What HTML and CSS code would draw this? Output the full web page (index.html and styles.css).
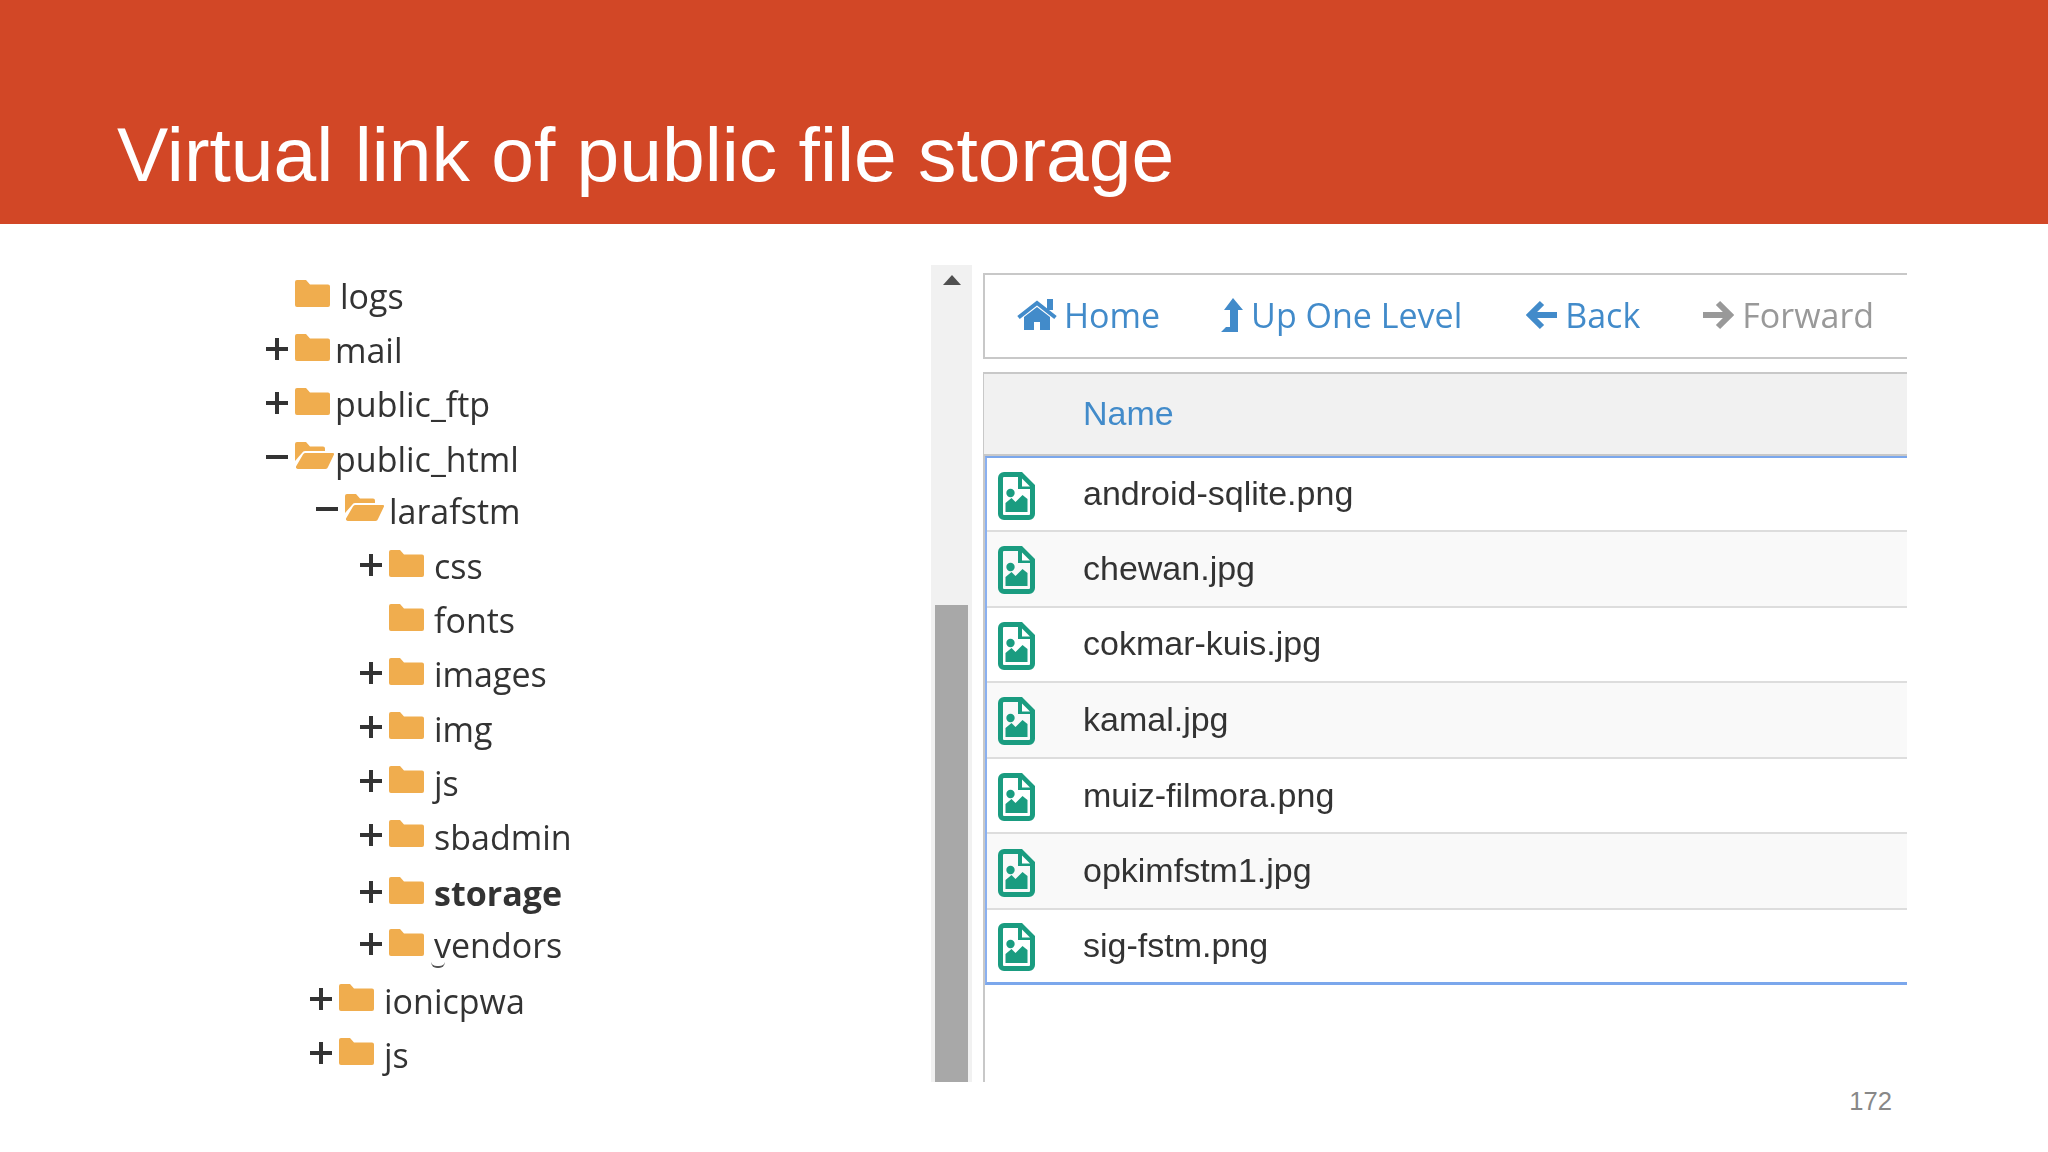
FILE: index.html
```html
<!DOCTYPE html>
<html lang="en">
<head>
<meta charset="utf-8">
<title>Virtual link of public file storage</title>
<link rel="stylesheet" href="styles.css">
</head>
<body>
<svg class="sprite" aria-hidden="true">
  <symbol id="folder" viewBox="0 0 35 27"><path d="M2 0h9l4 4.500h18a2 2 0 0 1 2 2V25a2 2 0 0 1-2 2H2a2 2 0 0 1-2-2V2a2 2 0 0 1 2-2z"/></symbol>
  <symbol id="folder-open" viewBox="0 0 39 27"><path d="M0 19V2a2 2 0 0 1 2-2h9l4 4.500h13a2 2 0 0 1 2 2V9H10q-2 0-3 2z"/><path d="M10 11h28a1 1 0 0 1 1 1.500L33 25a3 3 0 0 1-2.500 2H3a2 2 0 0 1-2-2.500L8 12.500q.8-1.500 2-1.500z"/></symbol>
  <symbol id="plus" viewBox="0 0 22 22"><path d="M0 9h22v4H0zM9 0h4v22H9z"/></symbol>
  <symbol id="minus" viewBox="0 0 22 22"><path d="M0 9h22v4H0z"/></symbol>
  <symbol id="file" viewBox="0 0 37 48"><path fill="#1a9c80" fill-rule="evenodd" d="M6 0h18l13 13v29a6 6 0 0 1-6 6H6a6 6 0 0 1-6-6V6a6 6 0 0 1 6-6zm0 5a1 1 0 0 0-1 1v36a1 1 0 0 0 1 1h25a1 1 0 0 0 1-1V17H20V5z"/><path fill="#fff" d="M24 6.500 32 14.500H24z"/><path fill="#1a9c80" d="M7.500 40v-9l6-5 4 4 7-7 5 4v13z"/><circle fill="#1a9c80" cx="12.500" cy="21" r="4.200"/></symbol>
  <symbol id="home" viewBox="0 0 40 31"><path d="M30 0h6v11h-6z"/><path d="M7 18 20 8l13 10v13H23v-8h-6v8H7z"/><path fill="none" stroke="currentColor" stroke-width="4" d="M1.500 18.500 20 4l18.500 14.500"/></symbol>
  <symbol id="level-up" viewBox="0 0 22 34"><path d="M12 0l10 12h-5v22H0l5-5h4V12H3z"/></symbol>
  <symbol id="arrow-left" viewBox="0 0 31 30"><path fill="none" stroke="currentColor" stroke-width="6" d="M16 3 4 15l12 12M4 15h27"/></symbol>
  <symbol id="arrow-right" viewBox="0 0 31 30"><path fill="none" stroke="currentColor" stroke-width="6" d="M15 3l12 12-12 12M27 15H0"/></symbol>
</svg>

<div class="slide">
  <header class="banner"><h1 class="title">Virtual link of public file storage</h1></header>

  <main class="content">
    <ul class="tree">
      <li class="node lv0 leaf"><span class="toggle"></span><svg class="folder"><use href="#folder"/></svg><span class="label gap-l">logs</span></li>
      <li class="node lv0"><svg class="toggle"><use href="#plus"/></svg><svg class="folder"><use href="#folder"/></svg><span class="label">mail</span></li>
      <li class="node lv0"><svg class="toggle"><use href="#plus"/></svg><svg class="folder"><use href="#folder"/></svg><span class="label">public_ftp</span></li>
      <li class="node lv0"><svg class="toggle"><use href="#minus"/></svg><svg class="folder-open"><use href="#folder-open"/></svg><span class="label flush">public_html</span></li>
      <li class="node lv1 short"><svg class="toggle"><use href="#minus"/></svg><svg class="folder-open"><use href="#folder-open"/></svg><span class="label">larafstm</span></li>
      <li class="node lv2 tall"><svg class="toggle"><use href="#plus"/></svg><svg class="folder"><use href="#folder"/></svg><span class="label gap-m">css</span></li>
      <li class="node lv2"><span class="toggle"></span><svg class="folder"><use href="#folder"/></svg><span class="label gap-m">fonts</span></li>
      <li class="node lv2"><svg class="toggle"><use href="#plus"/></svg><svg class="folder"><use href="#folder"/></svg><span class="label gap-m">images</span></li>
      <li class="node lv2"><svg class="toggle"><use href="#plus"/></svg><svg class="folder"><use href="#folder"/></svg><span class="label gap-m">img</span></li>
      <li class="node lv2"><svg class="toggle"><use href="#plus"/></svg><svg class="folder"><use href="#folder"/></svg><span class="label gap-m">js</span></li>
      <li class="node lv2"><svg class="toggle"><use href="#plus"/></svg><svg class="folder"><use href="#folder"/></svg><span class="label gap-m">sbadmin</span></li>
      <li class="node lv2 taller"><svg class="toggle"><use href="#plus"/></svg><svg class="folder"><use href="#folder"/></svg><span class="label gap-m strong">storage</span></li>
      <li class="node lv2 short vendors"><svg class="toggle"><use href="#plus"/></svg><svg class="folder"><use href="#folder"/></svg><span class="label gap-m">vendors</span></li>
      <li class="node lv1b tall"><svg class="toggle"><use href="#plus"/></svg><svg class="folder"><use href="#folder"/></svg><span class="label gap-m">ionicpwa</span></li>
      <li class="node lv1b"><svg class="toggle"><use href="#plus"/></svg><svg class="folder"><use href="#folder"/></svg><span class="label gap-m">js</span></li>
    </ul>

    <div class="scrollbar">
      <span class="scroll-up"></span>
      <span class="thumb"></span>
    </div>

    <section class="panel">
      <nav class="toolbar">
        <a class="tool home"><svg class="ico-home"><use href="#home"/></svg>Home</a>
        <a class="tool up"><svg class="ico-up"><use href="#level-up"/></svg>Up One Level</a>
        <a class="tool back"><svg class="ico-arrow"><use href="#arrow-left"/></svg>Back</a>
        <a class="tool forward"><svg class="ico-arrow"><use href="#arrow-right"/></svg>Forward</a>
      </nav>
      <div class="listing">
        <div class="head"><span class="head-name">Name</span></div>
        <div class="rows">
          <div class="row"><svg class="file"><use href="#file"/></svg><span class="name">android-sqlite.png</span></div>
          <div class="row"><svg class="file"><use href="#file"/></svg><span class="name">chewan.jpg</span></div>
          <div class="row"><svg class="file"><use href="#file"/></svg><span class="name">cokmar-kuis.jpg</span></div>
          <div class="row"><svg class="file"><use href="#file"/></svg><span class="name">kamal.jpg</span></div>
          <div class="row"><svg class="file"><use href="#file"/></svg><span class="name">muiz-filmora.png</span></div>
          <div class="row"><svg class="file"><use href="#file"/></svg><span class="name">opkimfstm1.jpg</span></div>
          <div class="row"><svg class="file"><use href="#file"/></svg><span class="name">sig-fstm.png</span></div>
        </div>
      </div>
    </section>
  </main>

  <footer class="footer">172</footer>
</div>
</body>
</html>
```

FILE: styles.css
```css
* { box-sizing: border-box; }
html, body { margin: 0; padding: 0; background: #fff; }
.sprite { display: none; }

.slide { width: 2048px; height: 1152px; display: flex; flex-direction: column; overflow: hidden; background: #fff; }

.banner { height: 224px; flex: none; background: #d24726; display: flex; align-items: flex-end; padding: 0 0 28px 117px; }
.title { margin: 0; font: 400 76.800px/84px "Liberation Sans", Arial, sans-serif; color: #fff; }

.content { display: flex; height: 858px; flex: none; filter: blur(.45px); }

.tree { list-style: none; margin: 0; padding: 45px 0 0 265px; width: 931px; flex: none; font: 400 34px/54px "Open Sans", sans-serif; color: #333; }
.node { height: 54.200px; display: flex; align-items: center; position: relative; }
.lv1 { margin-left: 50px; }
.lv1b { margin-left: 44px; }
.lv2 { margin-left: 94px; }
.short { margin-top: -2px; }
.tall { margin-top: 1px; }
.taller { margin-top: 2px; }
.toggle { width: 22px; height: 22px; fill: #333; flex: none; margin: -3px 7px 0 1px; }
.folder { width: 35px; height: 27px; fill: #f0ad4e; flex: none; margin-top: -6px; }
.folder-open { width: 39px; height: 27px; fill: #f0ad4e; flex: none; margin-top: -6px; }
.label { margin-left: 5px; }
.flush { margin-left: 1px; }
.gap-l { margin-left: 10px; }
.gap-m { margin-left: 10px; }
.strong { font-weight: 700; }
.vendors::after { content: ""; position: absolute; left: 72px; top: 44px; width: 14px; height: 4px; border-bottom: 2px solid #555; border-radius: 0 0 8px 8px; }

.scrollbar { width: 41px; height: 817px; margin-top: 41px; flex: none; background: #f1f1f1; display: flex; flex-direction: column; align-items: center; justify-content: space-between; padding-top: 10px; }
.scroll-up { width: 0; height: 0; border-left: 9px solid transparent; border-right: 9px solid transparent; border-bottom: 10px solid #505050; }
.thumb { width: 33px; height: 477px; background: #a8a8a8; }

.panel { width: 924px; height: 809px; margin: 49px 0 0 11px; flex: none; display: flex; flex-direction: column; gap: 13px; }
.toolbar { height: 86px; flex: none; border: solid #c8c8c8; border-width: 2px 0 2px 2px; display: flex; align-items: center; padding-bottom: 3px; font: 400 34px/1 "Open Sans", sans-serif; color: #428bca; }
.tool { display: flex; align-items: center; }
.tool svg { fill: currentColor; color: inherit; flex: none; }
.home { margin-left: 32px; }
.up { margin-left: 61px; }
.back { margin-left: 64px; }
.forward { margin-left: 63px; color: #999; }
.ico-home { width: 40px; height: 31px; margin-right: 7px; }
.ico-up { width: 22px; height: 34px; margin-right: 8px; }
.ico-arrow { width: 31px; height: 30px; margin-right: 8px; }

.listing { flex: 1; border-left: 2px solid #c8c8c8; display: flex; flex-direction: column; }
.head { height: 84px; flex: none; background: #f1f1f1; border-top: 2px solid #c8c8c8; border-bottom: 2px solid #c8c8c8; margin-left: -1px; display: flex; align-items: center; padding: 0 0 2px 99px; font: 400 34px/1 "Liberation Sans", sans-serif; color: #428bca; }
.rows { border-top: 2px solid #7ba7ec; border-left: 2px solid #8ab0f0; border-bottom: 3px solid #7ba7ec; font: 400 34px/1 "Liberation Sans", sans-serif; color: #333; }
.row { height: 75.600px; display: flex; align-items: center; border-bottom: 2px solid #ddd; }
.row:nth-child(1) { height: 74px; }
.row:nth-child(even) { background: #f9f9f9; }
.row:last-child { height: 72px; border-bottom: 0; }
.file { width: 37px; height: 48px; flex: none; margin-left: 11px; margin-top: 3px; }
.name { margin: -2px 0 0 48px; }

.footer { flex: none; padding: 3px 156px 0 0; text-align: right; font: 400 25.600px/32px "Liberation Sans", sans-serif; color: #888; }
```
